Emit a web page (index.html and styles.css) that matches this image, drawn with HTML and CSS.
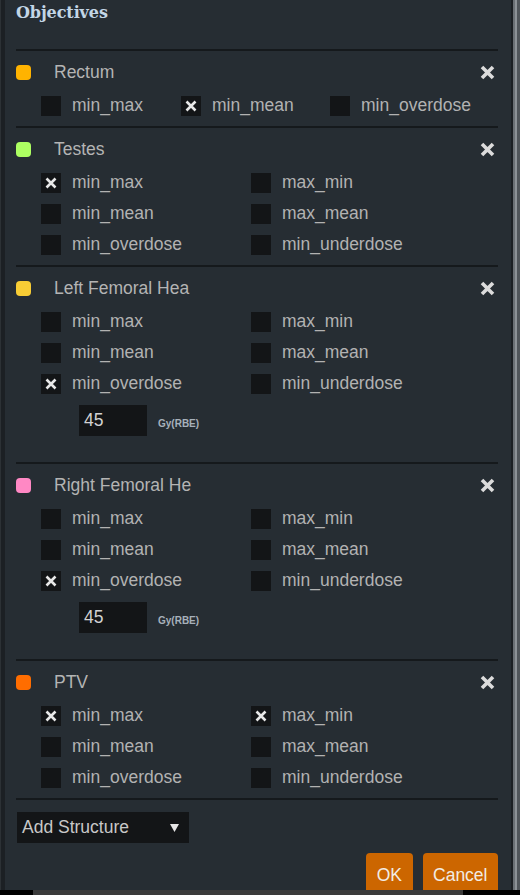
FILE: index.html
```html
<!DOCTYPE html>
<html>
<head>
<meta charset="utf-8">
<link rel="stylesheet" href="styles.css">
</head>
<body>
<div class="screen">
  <div class="edge"></div>
  <div class="panel">
    <h1 class="title">Objectives</h1>
    <div class="sep"></div>

    <section class="struct">
      <div class="head">
        <span class="swatch c-rectum"></span>
        <span class="name">Rectum</span>
        <svg class="close" viewBox="0 0 15 15"><path d="M2 2L13 13M13 2L2 13"/></svg>
      </div>
      <div class="opts three">
        <label class="opt"><span class="box"></span><span>min_max</span></label>
        <label class="opt"><span class="box on"><svg viewBox="0 0 20 20"><path d="M5.5 5.5L14.5 14.5M14.5 5.5L5.5 14.5"/></svg></span><span>min_mean</span></label>
        <label class="opt"><span class="box"></span><span>min_overdose</span></label>
      </div>
    </section>
    <div class="sep"></div>

    <section class="struct">
      <div class="head">
        <span class="swatch c-testes"></span>
        <span class="name">Testes</span>
        <svg class="close" viewBox="0 0 15 15"><path d="M2 2L13 13M13 2L2 13"/></svg>
      </div>
      <div class="opts two">
        <label class="opt"><span class="box on"><svg viewBox="0 0 20 20"><path d="M5.5 5.5L14.5 14.5M14.5 5.5L5.5 14.5"/></svg></span><span>min_max</span></label>
        <label class="opt"><span class="box"></span><span>max_min</span></label>
        <label class="opt"><span class="box"></span><span>min_mean</span></label>
        <label class="opt"><span class="box"></span><span>max_mean</span></label>
        <label class="opt"><span class="box"></span><span>min_overdose</span></label>
        <label class="opt"><span class="box"></span><span>min_underdose</span></label>
      </div>
    </section>
    <div class="sep"></div>

    <section class="struct dose">
      <div class="head">
        <span class="swatch c-lfh"></span>
        <span class="name">Left Femoral Hea</span>
        <svg class="close" viewBox="0 0 15 15"><path d="M2 2L13 13M13 2L2 13"/></svg>
      </div>
      <div class="opts two">
        <label class="opt"><span class="box"></span><span>min_max</span></label>
        <label class="opt"><span class="box"></span><span>max_min</span></label>
        <label class="opt"><span class="box"></span><span>min_mean</span></label>
        <label class="opt"><span class="box"></span><span>max_mean</span></label>
        <label class="opt"><span class="box on"><svg viewBox="0 0 20 20"><path d="M5.5 5.5L14.5 14.5M14.5 5.5L5.5 14.5"/></svg></span><span>min_overdose</span></label>
        <label class="opt"><span class="box"></span><span>min_underdose</span></label>
      </div>
      <div class="dose-row">
        <span class="num">45</span>
        <span class="unit">Gy(RBE)</span>
      </div>
    </section>
    <div class="sep"></div>

    <section class="struct dose">
      <div class="head">
        <span class="swatch c-rfh"></span>
        <span class="name">Right Femoral He</span>
        <svg class="close" viewBox="0 0 15 15"><path d="M2 2L13 13M13 2L2 13"/></svg>
      </div>
      <div class="opts two">
        <label class="opt"><span class="box"></span><span>min_max</span></label>
        <label class="opt"><span class="box"></span><span>max_min</span></label>
        <label class="opt"><span class="box"></span><span>min_mean</span></label>
        <label class="opt"><span class="box"></span><span>max_mean</span></label>
        <label class="opt"><span class="box on"><svg viewBox="0 0 20 20"><path d="M5.5 5.5L14.5 14.5M14.5 5.5L5.5 14.5"/></svg></span><span>min_overdose</span></label>
        <label class="opt"><span class="box"></span><span>min_underdose</span></label>
      </div>
      <div class="dose-row">
        <span class="num">45</span>
        <span class="unit">Gy(RBE)</span>
      </div>
    </section>
    <div class="sep"></div>

    <section class="struct">
      <div class="head">
        <span class="swatch c-ptv"></span>
        <span class="name">PTV</span>
        <svg class="close" viewBox="0 0 15 15"><path d="M2 2L13 13M13 2L2 13"/></svg>
      </div>
      <div class="opts two">
        <label class="opt"><span class="box on"><svg viewBox="0 0 20 20"><path d="M5.5 5.5L14.5 14.5M14.5 5.5L5.5 14.5"/></svg></span><span>min_max</span></label>
        <label class="opt"><span class="box on"><svg viewBox="0 0 20 20"><path d="M5.5 5.5L14.5 14.5M14.5 5.5L5.5 14.5"/></svg></span><span>max_min</span></label>
        <label class="opt"><span class="box"></span><span>min_mean</span></label>
        <label class="opt"><span class="box"></span><span>max_mean</span></label>
        <label class="opt"><span class="box"></span><span>min_overdose</span></label>
        <label class="opt"><span class="box"></span><span>min_underdose</span></label>
      </div>
    </section>
    <div class="sep"></div>

    <div class="select">
      <span>Add Structure</span>
      <svg class="arrow" viewBox="0 0 9 8"><path d="M0 0H9L4.5 8Z"/></svg>
    </div>

    <div class="buttons">
      <button class="btn">OK</button>
      <button class="btn">Cancel</button>
    </div>
  </div>
  <div class="scroll"><span class="s1"></span><span class="s2"></span><span class="s3"></span><span class="s4"></span></div>
</div>
<div class="bottom"><span class="b-left"></span><span class="b-mid"></span><span class="b-right"></span></div>
</body>
</html>
```

FILE: styles.css
```css
html, body {
  margin: 0;
  padding: 0;
  background: #262d33;
}
body {
  width: 520px;
  height: 895px;
  overflow: hidden;
  font-family: "Liberation Sans", Arial, sans-serif;
  font-size: 17.5px;
  color: #b4b4b4;
}
.screen {
  display: flex;
  height: 890px;
  overflow: hidden;
}
.edge {
  width: 1px;
  border-right: 4px solid #1c2024;
  background: #2c3135;
  flex: none;
}
.panel {
  flex: 1;
  padding: 0 13px 0 11px;
  display: flex;
  flex-direction: column;
  min-width: 0;
}
.title {
  margin: 3px 0 0 0;
  height: 20px;
  line-height: 20px;
  font-family: "DejaVu Serif", Georgia, serif;
  font-weight: bold;
  font-size: 16px;
  color: #c3d6e6;
  letter-spacing: -0.1px;
}
.sep {
  height: 2px;
  background: #15191c;
  flex: none;
}
.title + .sep {
  margin-top: 26px;
}
.struct {
  padding-bottom: 5px;
}
.struct.dose {
  padding-bottom: 26px;
}
.head {
  margin-top: 6px;
  height: 30px;
  display: flex;
  align-items: center;
}
.swatch {
  width: 15px;
  height: 15px;
  border-radius: 4px;
  flex: none;
  margin-right: 23px;
}
.c-rectum { background: #ffb300; }
.c-testes { background: #adff62; }
.c-lfh { background: #f8cd35; }
.c-rfh { background: #ff88c4; }
.c-ptv { background: #ff6d00; }
.name {
  flex: 1;
  color: #b4b4b4;
}
.close {
  width: 15px;
  height: 15px;
  margin-right: 3px;
  margin-top: 1px;
}
.close path {
  stroke: #dcdcdc;
  stroke-width: 3.6;
  fill: none;
}
.opts {
  margin-top: 3px;
  padding-left: 25px;
  display: grid;
}
.opts.two {
  grid-template-columns: 210px 210px;
}
.opts.three {
  grid-template-columns: 140px 149px auto;
}
.opt {
  height: 31px;
  display: flex;
  align-items: center;
  white-space: nowrap;
  color: #b2b2b2;
}
.box {
  width: 20px;
  height: 20px;
  background: #131517;
  margin-right: 11px;
  flex: none;
  display: flex;
}
.box svg {
  width: 20px;
  height: 20px;
}
.box svg path {
  stroke: #e8e8e8;
  stroke-width: 2.6;
  fill: none;
}
.dose-row {
  margin-top: 6px;
  padding-left: 63px;
  display: flex;
  align-items: center;
  height: 31px;
}
.num {
  width: 63px;
  height: 31px;
  line-height: 31px;
  padding-left: 5px;
  background: #131517;
  color: #d2d2d2;
}
.unit {
  margin-left: 11px;
  padding-top: 5px;
  font-size: 10px;
  font-weight: bold;
  color: #a7b1bb;
}
.select {
  margin-top: 12px;
  margin-left: 1px;
  width: 167px;
  height: 31px;
  padding-left: 5px;
  background: #131517;
  display: flex;
  align-items: center;
  color: #c8c8c8;
  flex: none;
}
.select span {
  flex: 1;
}
.arrow {
  width: 9px;
  height: 8px;
  margin-right: 10px;
  margin-top: 1px;
}
.arrow path {
  fill: #e6e6e6;
}
.buttons {
  margin-top: 10px;
  display: flex;
  justify-content: flex-end;
  gap: 10px;
  flex: none;
}
.btn {
  height: 44px;
  padding: 0 10.5px;
  border: none;
  border-radius: 4px;
  background: #cc6600;
  color: #f2ece4;
  font-family: "Liberation Sans", Arial, sans-serif;
  font-size: 17.5px;
  line-height: 44px;
}
.scroll {
  flex: none;
  display: flex;
  width: 9px;
}
.scroll span {
  display: block;
  height: 100%;
}
.s1 { width: 2px; background: #1b1f23; }
.s2 { width: 2px; background: #6a6f74; }
.s3 { width: 2px; background: #8c9196; }
.s4 { width: 3px; background: #50555a; }
.bottom {
  display: flex;
  height: 5px;
}
.b-left { width: 33px; background: #000; }
.b-mid { width: 430px; background: #3b3b3b; }
.b-right { flex: 1; background: #000; }
```
